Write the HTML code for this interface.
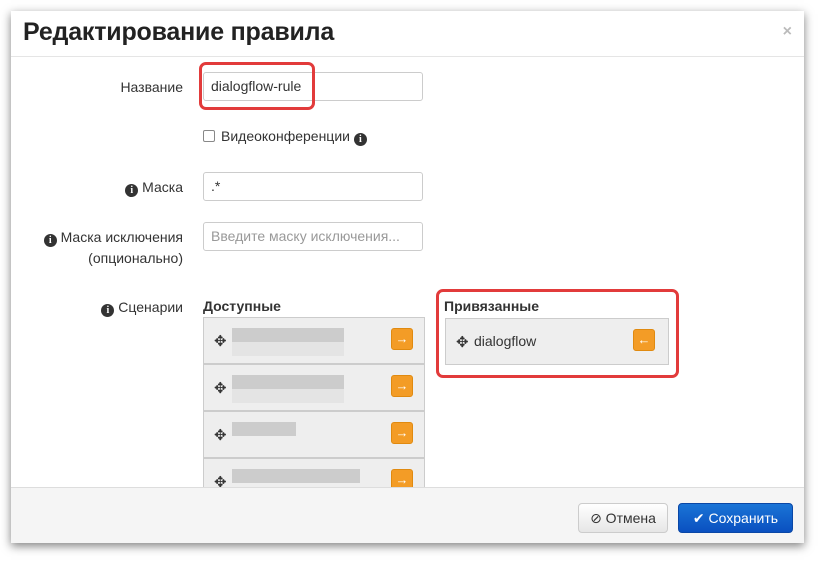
<!DOCTYPE html>
<html><head><meta charset="utf-8"><style>
*{box-sizing:border-box}
body{margin:0;width:823px;height:562px;background:#fff;font-family:"Liberation Sans","DejaVu Sans",sans-serif;font-size:14px;color:#333;position:relative;overflow:hidden}
.modal{position:absolute;left:11px;top:11px;width:793px;height:532px;background:#fff;box-shadow:0 3px 9px rgba(0,0,0,.5);overflow:hidden}
.hdr{position:absolute;left:0;top:0;width:100%;height:46px;border-bottom:1px solid #e5e5e5}
.hdr h1{margin:0;position:absolute;left:12px;top:7px;font-size:25px;font-weight:bold;color:#222;letter-spacing:-0.2px}
.x{position:absolute;right:12px;top:12px;color:#bbb;font-size:16px;font-weight:bold}
.lbl{position:absolute;right:621px;text-align:right;font-size:14px;color:#333;line-height:21px}
.inp{position:absolute;left:192px;width:220px;height:29px;border:1px solid #ccc;border-radius:3px;padding:5px 7px;font-size:14px;color:#333}
.info{display:inline-block;width:13px;height:13px;border-radius:50%;background:#333;color:#fff;font-size:10px;font-weight:bold;text-align:center;line-height:13px;font-family:"Liberation Serif",serif;vertical-align:-1px}
.red{position:absolute;border:3px solid #e23b3b;border-radius:7px}
.item{position:absolute;background:#eee;border:1px solid #ccc}
.mv{position:absolute;left:10px;font-size:15px;color:#333}
.ob{position:absolute;width:22px;height:22px;background:#f39c26;border:1px solid #e08a10;border-radius:3px;color:#fff;font-size:13px;font-weight:bold;text-align:center;line-height:20px}
.blur{position:absolute;left:28px;height:14px;background:#ccc}
.blur2{position:absolute;left:28px;height:14px;background:#e4e4e4}
.ftr{position:absolute;left:0;top:476px;width:100%;height:56px;background:#f5f5f5;border-top:1px solid #ddd}
.btn{position:absolute;top:15px;height:30px;border-radius:4px;font-size:14px;line-height:28px;text-align:center}
</style></head><body>
<div class="modal">
<div class="hdr"><h1>Редактирование правила</h1><span class="x">×</span></div>
<div class="lbl" style="top:66px">Название</div>
<div class="inp" style="top:61px">dialogflow-rule</div>
<div class="red" style="left:188px;top:51px;width:116px;height:48px"></div>
<div style="position:absolute;left:192px;top:117px;font-size:14px"><span style="display:inline-block;width:12px;height:12px;border:1px solid #888;border-radius:2px;vertical-align:-1px;margin-right:6px"></span>Видеоконференции <span class="info">i</span></div>
<div class="lbl" style="top:166px"><span class="info">i</span> Маска</div>
<div class="inp" style="top:161px">.*</div>
<div class="lbl" style="top:216px"><span class="info">i</span> Маска исключения<br>(опционально)</div>
<div class="inp" style="top:211px;color:#999">Введите маску исключения...</div>
<div class="lbl" style="top:286px"><span class="info">i</span> Сценарии</div>
<div style="position:absolute;left:192px;top:287px;font-weight:bold;font-size:14px">Доступные</div>
<div style="position:absolute;left:192px;top:306px;width:222px;height:180px;overflow:hidden">
 <div class="item" style="left:0;top:0;width:222px;height:47px"><span class="mv" style="top:14px">✥</span><div class="blur" style="top:10px;width:112px"></div><div class="blur2" style="top:24px;width:112px"></div><div class="ob" style="left:187px;top:10px">→</div></div>
 <div class="item" style="left:0;top:47px;width:222px;height:47px"><span class="mv" style="top:14px">✥</span><div class="blur" style="top:10px;width:112px"></div><div class="blur2" style="top:24px;width:112px"></div><div class="ob" style="left:187px;top:10px">→</div></div>
 <div class="item" style="left:0;top:94px;width:222px;height:47px"><span class="mv" style="top:14px">✥</span><div class="blur" style="top:10px;width:64px"></div><div class="ob" style="left:187px;top:10px">→</div></div>
 <div class="item" style="left:0;top:141px;width:222px;height:47px"><span class="mv" style="top:14px">✥</span><div class="blur" style="top:10px;width:128px"></div><div class="ob" style="left:187px;top:10px">→</div></div>
</div>
<div class="red" style="left:425px;top:278px;width:243px;height:89px"></div>
<div style="position:absolute;left:433px;top:287px;font-weight:bold;font-size:14px">Привязанные</div>
<div class="item" style="left:434px;top:307px;width:224px;height:47px"><span class="mv" style="top:14px">✥</span><span style="position:absolute;left:28px;top:14px;font-size:14px">dialogflow</span><div class="ob" style="left:187px;top:10px">←</div></div>
<div class="ftr">
 <div class="btn" style="left:567px;width:90px;background:linear-gradient(#fff,#e6e6e6);border:1px solid #ccc;color:#333">⊘ Отмена</div>
 <div class="btn" style="left:667px;width:115px;background:linear-gradient(#1a74d6,#0a50c0);border:1px solid #0a47a6;color:#fff">✔ Сохранить</div>
</div>
</div>
</body></html>
